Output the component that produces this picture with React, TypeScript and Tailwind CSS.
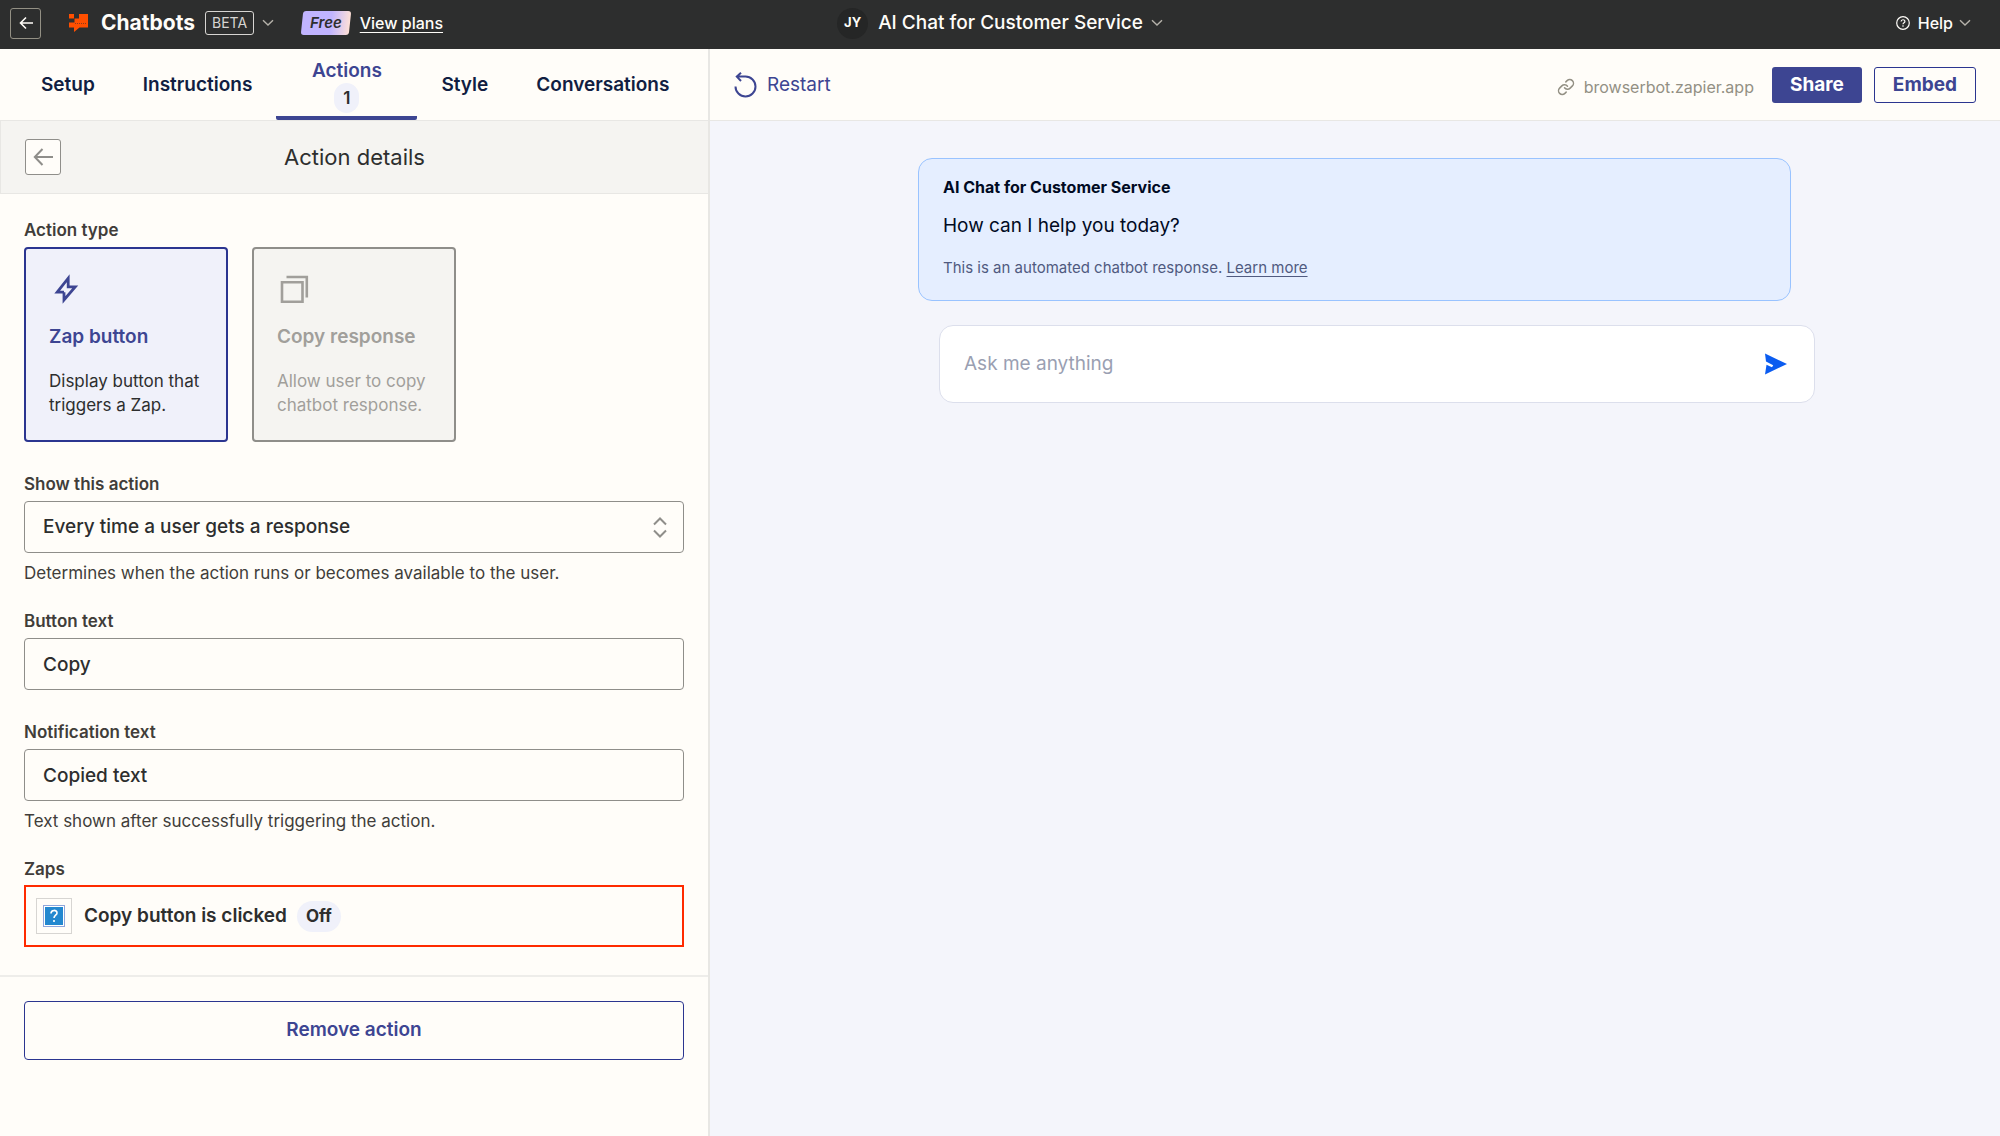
import { useState } from 'react';
import type { ReactNode } from 'react';
import { Link } from 'lucide-react';

function ChevronDown() {
  return (
    <svg width="12" height="8" viewBox="0 0 12 8" fill="none" stroke="#b5b2aa" strokeWidth="1.4" aria-hidden="true">
      <path d="M1 1.2 6 6l5-4.8" />
    </svg>
  );
}

function ChatbotsLogo() {
  return (
    <svg width="20" height="20" viewBox="0 0 20 20" fill="#ff4f00" aria-hidden="true">
      <path d="M0 1h5v4.500h5V1h9v13.500h-8.500L5 19v-4.500H0V9.500h5.500V5.500H0z" />
      <path d="M6 10.500h12" stroke="#8a3a1c" strokeWidth="1" strokeDasharray="1 1" />
    </svg>
  );
}

function TopBar() {
  return (
    <header className="grid h-[49px] grid-cols-[1fr_auto_1fr] items-center bg-[#2d2e2e] pb-[3px] text-[#fffdf9]">
      <div className="flex items-center pl-[10px]">
        <button aria-label="Back" className="flex size-[31px] items-center justify-center rounded-[3px] border border-[#939084]">
          <svg width="14" height="14" viewBox="0 0 14 14" fill="none" stroke="currentColor" strokeWidth="1.6">
            <path d="M14 7H1.5M7 1.5 1.5 7 7 12.5" />
          </svg>
        </button>
        <span className="ml-7">
          <ChatbotsLogo />
        </span>
        <span className="ml-3 text-[21px] leading-7 font-bold">Chatbots</span>
        <span className="ml-[10px] rounded-[3px] border border-[#d7d5d2] px-[6px] text-[14px] leading-[22px] text-[#d7d5d2]">BETA</span>
        <button aria-label="Switch product" className="ml-2">
          <ChevronDown />
        </button>
        <span className="relative ml-7 px-[8px] text-[15px] leading-6 font-semibold text-[#2d2e2e] italic">
          <span className="absolute inset-0 -skew-x-6 rounded-[3px] bg-linear-to-r from-[#c1b4ff] from-60% to-[#ffe0d6]" />
          <span className="relative">Free</span>
        </span>
        <a href="#plans" className="ml-[10px] text-[16px] font-medium underline underline-offset-3">
          View plans
        </a>
      </div>

      <div className="flex items-center">
        <span className="flex size-[31px] items-center justify-center rounded-full bg-[#252626] text-[13px] font-bold">JY</span>
        <h1 className="ml-[10px] text-[19px] font-medium">AI Chat for Customer Service</h1>
        <button aria-label="Chatbot menu" className="ml-2">
          <ChevronDown />
        </button>
      </div>

      <div className="flex justify-end pr-[29px]">
        <button className="flex items-center text-[16px] font-medium">
          <svg width="14" height="14" viewBox="0 0 14 14" fill="none" stroke="currentColor" strokeWidth="1.2" aria-hidden="true">
            <circle cx="7" cy="7" r="6.3" />
            <path d="M5.1 5.6c0-2.5 3.8-2.4 3.8-.2 0 1.3-1.9 1.3-1.9 2.8M7 9.3v1.4" />
          </svg>
          <span className="mr-[6px] ml-2">Help</span>
          <ChevronDown />
        </button>
      </div>
    </header>
  );
}

const tabs = ['Setup', 'Instructions', 'Actions', 'Style', 'Conversations'];

function Tabs() {
  const [active, setActive] = useState('Actions');

  return (
    <nav className="flex h-[72px] border-b border-[#e8e7e4] bg-[#fffdf9] pl-[17px]">
      {tabs.map((tab) => (
        <button
          key={tab}
          onClick={() => setActive(tab)}
          className={
            tab === active
              ? 'flex w-[141px] flex-col items-center rounded-b-xs border-b-4 border-[#3d4592] text-[19px] leading-6 font-semibold text-[#3d4592]'
              : 'px-6 pt-[2px] text-[19px] font-semibold text-[#111e42]'
          }
        >
          <span className={tab === 'Actions' ? 'pt-[10px]' : ''}>{tab}</span>
          {tab === 'Actions' && (
            <span className="rounded-full bg-[#f0f1fa] px-[9px] text-[17px] leading-[30px] text-[#2d2e2e]">1</span>
          )}
        </button>
      ))}
    </nav>
  );
}

interface TypeCardProps {
  icon: ReactNode;
  title: string;
  text: string;
  selected?: boolean;
}

function TypeCard({ icon, title, text, selected }: TypeCardProps) {
  return (
    <button
      disabled={!selected}
      className={
        selected
          ? 'flex h-[195px] w-[204px] flex-col items-start rounded-[4px] border-2 border-[#2b3590] bg-[#f0f1fa] px-[23px] pt-6 text-left text-[#2d2e2e]'
          : 'flex h-[195px] w-[204px] flex-col items-start rounded-[4px] border-2 border-[#8f8e8a] bg-[#f5f4f1] px-[23px] pt-6 text-left text-[#a19f9b]'
      }
    >
      {icon}
      <span className={selected ? 'mt-5 text-[19px] leading-6 font-semibold text-[#3d4592]' : 'mt-5 text-[19px] leading-6 font-semibold'}>
        {title}
      </span>
      <span className="mt-5 text-[17px] leading-6">{text}</span>
    </button>
  );
}

interface FieldProps {
  id: string;
  label: string;
  help?: string;
  children: ReactNode;
}

function Field({ id, label, help, children }: FieldProps) {
  return (
    <div className={help ? '' : 'pb-[6px]'}>
      <label htmlFor={id} className="mb-[5px] block text-[17px] leading-6 font-semibold">
        {label}
      </label>
      {children}
      {help && <p className="mt-2 text-[17px] leading-6">{help}</p>}
    </div>
  );
}

const inputClass =
  'block h-[52px] w-full rounded-[4px] border border-[#8f8e8a] bg-[#fffdf9] px-[18px] text-[19px] font-medium text-[#2d2e2e] outline-none';

function ActionDetails() {
  const [buttonText, setButtonText] = useState('Copy');
  const [notification, setNotification] = useState('Copied text');

  return (
    <section className="flex-1 text-[#413d3a]">
      <div className="relative flex h-[73px] items-center justify-center border-b border-l border-[#e8e7e4] bg-[#f5f4f1]">
        <button
          aria-label="Back to actions"
          className="absolute left-6 flex size-[36px] items-center justify-center rounded-[3px] border border-[#8f8e8a] bg-[#fffdf9]"
        >
          <svg width="20" height="18" viewBox="0 0 20 18" fill="none" stroke="#8f8e8a" strokeWidth="2">
            <path d="M20 9H2M9.5 1 1.800 9l7.700 8" />
          </svg>
        </button>
        <h2 className="text-[22px] text-[#2d2e2e]">Action details</h2>
      </div>

      <div className="flex flex-col gap-6 border-b-2 border-[#eeedea] px-6 pt-6 pb-7">
        <div className="pb-[6px]">
          <h3 className="mb-[5px] text-[17px] leading-6 font-semibold">Action type</h3>
          <div className="flex gap-6">
            <TypeCard
              selected
              title="Zap button"
              text="Display button that triggers a Zap."
              icon={
                <svg width="32" height="32" viewBox="0 0 32 32" fill="none" stroke="#3d4592" strokeWidth="2.800" aria-hidden="true">
                  <path d="M15 19.200H8.200L19.200 5.200v8.600h7L15 27v-7.800" />
                </svg>
              }
            />
            <TypeCard
              title="Copy response"
              text="Allow user to copy chatbot response."
              icon={
                <svg width="32" height="32" viewBox="0 0 32 32" fill="none" stroke="#a19f9b" strokeWidth="2.600" aria-hidden="true">
                  <path d="M5 9.200h20.500v19.500H5zM9.500 4h20.300v20.500" />
                </svg>
              }
            />
          </div>
        </div>

        <Field id="show-action" label="Show this action" help="Determines when the action runs or becomes available to the user.">
          <div className="relative">
            <select id="show-action" className={`${inputClass} appearance-none`}>
              <option>Every time a user gets a response</option>
            </select>
            <svg
              className="pointer-events-none absolute top-4 right-[17px]"
              width="14"
              height="21"
              viewBox="0 0 14 21"
              fill="none"
              stroke="#8f8e8a"
              strokeWidth="2"
              aria-hidden="true"
            >
              <path d="M1 7.500 7 1.500l6 6M1 13.500l6 6 6-6" />
            </svg>
          </div>
        </Field>

        <Field id="button-text" label="Button text">
          <input id="button-text" className={inputClass} value={buttonText} onChange={(e) => setButtonText(e.target.value)} />
        </Field>

        <Field id="notification-text" label="Notification text" help="Text shown after successfully triggering the action.">
          <input
            id="notification-text"
            className={inputClass}
            value={notification}
            onChange={(e) => setNotification(e.target.value)}
          />
        </Field>

        <div>
          <h3 className="mb-1 text-[17px] leading-6 font-semibold">Zaps</h3>
          <button className="flex h-[62px] w-full items-center border-2 border-[#ff2a00] px-[10px] text-left">
            <span className="flex size-[36px] items-center justify-center border border-[#d7d5d2]">
              <svg width="22" height="22" viewBox="0 0 22 22" aria-hidden="true">
                <rect x="0.500" y="0.500" width="21" height="21" fill="#fff" stroke="#8fa6dc" />
                <rect x="2" y="2" width="18" height="18" fill="#2388cf" />
                <path d="M8 8.500c0-4 6-4 6-.6 0 2.200-3 2.400-3 5.100M11 15v2" fill="none" stroke="#fff" strokeWidth="1.600" />
              </svg>
            </span>
            <span className="ml-3 text-[19px] font-semibold text-[#2d2e2e]">Copy button is clicked</span>
            <span className="ml-[10px] rounded-full bg-[#f0f1fa] px-[9px] text-[17px] leading-[31px] font-bold text-[#2d2e2e]">Off</span>
          </button>
        </div>
      </div>

      <div className="p-6">
        <button className="h-[59px] w-full rounded-[4px] border border-[#2b3590] text-[19px] font-semibold text-[#3d4592]">
          Remove action
        </button>
      </div>
    </section>
  );
}

function PreviewBar() {
  return (
    <div className="flex h-[72px] items-center border-b border-[#e8e7e4] bg-[#fffdf9] px-6 pt-px">
      <button className="flex items-center gap-[10px] text-[19px] text-[#3d4592]">
        <svg width="23" height="26" viewBox="0 0 23 26" fill="none" stroke="currentColor" strokeWidth="2" aria-hidden="true">
          <path d="M1.500 14.500a10 10 0 1 0 10-10H2.500M7 .8 2.800 4.600 7 9" />
        </svg>
        Restart
      </button>
      <a href="#chatbot" className="mt-1 ml-auto flex items-center gap-[9px] text-[16px] text-[#939084]">
        <Link size={18} strokeWidth={2} aria-hidden="true" />
        browserbot.zapier.app
      </a>
      <button className="ml-[18px] h-[36px] rounded-[3px] bg-[#3d4592] px-[18px] text-[19px] font-bold text-white">Share</button>
      <button className="ml-3 h-[36px] rounded-[3px] border border-[#2b3590] px-[18px] text-[19px] font-bold text-[#3d4592]">
        Embed
      </button>
    </div>
  );
}

function ChatPreview() {
  const [message, setMessage] = useState('');

  return (
    <main className="flex-1 bg-[#f4f5fb] pt-[37px] pr-[209px] pl-[208px] text-[#000a23]">
      <div className="rounded-[14px] border border-[#99c3ff] bg-[#e5eeff] px-6 pt-4 pb-5">
        <p className="text-[16px] leading-6 font-bold">AI Chat for Customer Service</p>
        <p className="mt-[15px] text-[19px] leading-6">How can I help you today?</p>
        <p className="mt-[18px] text-[15px] leading-6 text-[#505a80]">
          This is an automated chatbot response.{' '}
          <a href="#learn" className="underline underline-offset-3">
            Learn more
          </a>
        </p>
      </div>

      <form className="-mr-6 mt-6 ml-[21px] flex h-[78px] items-center rounded-[14px] border border-[#dcdfec] bg-white pr-[26px] pl-6">
        <input
          aria-label="Message"
          className="flex-1 text-[19px] outline-none placeholder:text-[#9a9fb2]"
          placeholder="Ask me anything"
          value={message}
          onChange={(e) => setMessage(e.target.value)}
        />
        <button type="button" aria-label="Send">
          <svg width="24" height="22" viewBox="0 0 24 22" fill="#0b5cf0">
            <path d="M1 0.500 23 11 1 21.500 2.500 11.800 8 14.200l1.200-2L2 8.500z" />
          </svg>
        </button>
      </form>
    </main>
  );
}

export default function App() {
  return (
    <div className="flex min-h-screen flex-col font-['Inter',sans-serif]">
      <TopBar />
      <div className="grid flex-1 grid-cols-[710px_1fr]">
        <aside className="flex flex-col border-r-2 border-[#e8e7e4] bg-[#fffdf9]">
          <Tabs />
          <ActionDetails />
        </aside>
        <div className="flex flex-col">
          <PreviewBar />
          <ChatPreview />
        </div>
      </div>
    </div>
  );
}
